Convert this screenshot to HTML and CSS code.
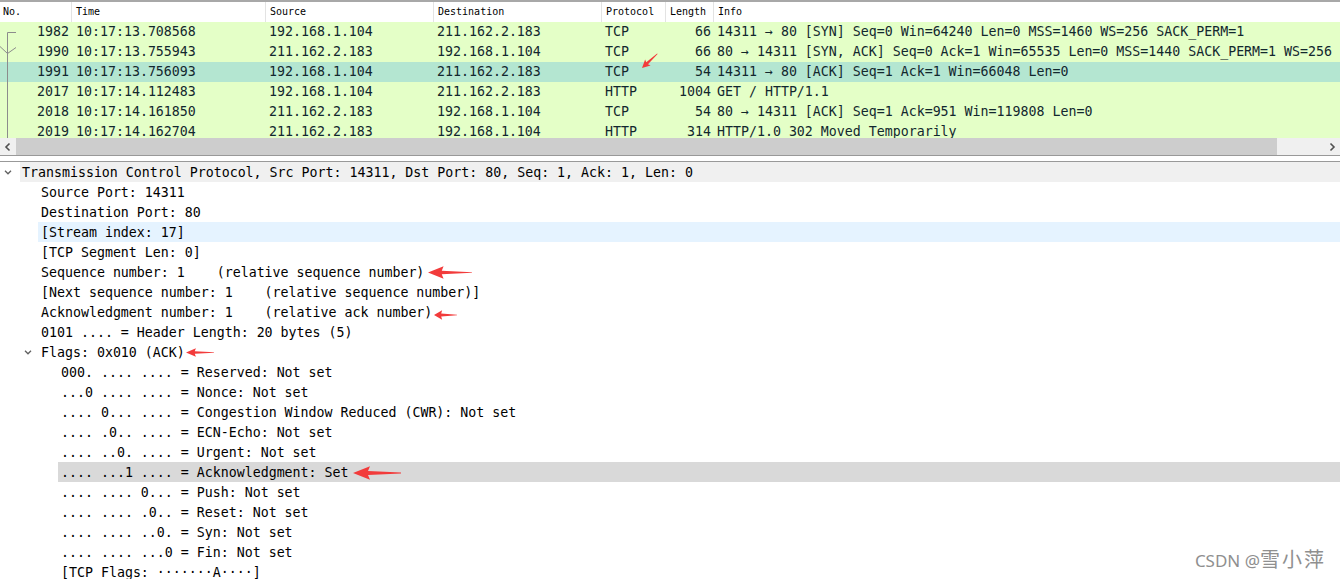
FILE: index.html
```html
<!DOCTYPE html>
<html>
<head>
<meta charset="utf-8">
<link rel="stylesheet" href="styles.css">
</head>
<body>
<div class="window">
  <div class="plist">
    <div class="phead">
      <div class="hc first">No.</div>
      <div class="hc">Time</div>
      <div class="hc">Source</div>
      <div class="hc">Destination</div>
      <div class="hc">Protocol</div>
      <div class="hc">Length</div>
      <div class="hc">Info</div>
    </div>
    <div class="prows">
      <div class="prow"><div class="c num">1982</div><div class="c">10:17:13.708568</div><div class="c">192.168.1.104</div><div class="c">211.162.2.183</div><div class="c">TCP</div><div class="c num">66</div><div class="c">14311 → 80 [SYN] Seq=0 Win=64240 Len=0 MSS=1460 WS=256 SACK_PERM=1</div></div>
      <div class="prow"><div class="c num">1990</div><div class="c">10:17:13.755943</div><div class="c">211.162.2.183</div><div class="c">192.168.1.104</div><div class="c">TCP</div><div class="c num">66</div><div class="c">80 → 14311 [SYN, ACK] Seq=0 Ack=1 Win=65535 Len=0 MSS=1440 SACK_PERM=1 WS=256</div></div>
      <div class="prow sel"><div class="c num">1991</div><div class="c">10:17:13.756093</div><div class="c">192.168.1.104</div><div class="c">211.162.2.183</div><div class="c">TCP</div><div class="c num">54</div><div class="c">14311 → 80 [ACK] Seq=1 Ack=1 Win=66048 Len=0</div></div>
      <div class="prow"><div class="c num">2017</div><div class="c">10:17:14.112483</div><div class="c">192.168.1.104</div><div class="c">211.162.2.183</div><div class="c">HTTP</div><div class="c num">1004</div><div class="c">GET / HTTP/1.1</div></div>
      <div class="prow"><div class="c num">2018</div><div class="c">10:17:14.161850</div><div class="c">211.162.2.183</div><div class="c">192.168.1.104</div><div class="c">TCP</div><div class="c num">54</div><div class="c">80 → 14311 [ACK] Seq=1 Ack=951 Win=119808 Len=0</div></div>
      <div class="prow"><div class="c num">2019</div><div class="c">10:17:14.162704</div><div class="c">211.162.2.183</div><div class="c">192.168.1.104</div><div class="c">HTTP</div><div class="c num">314</div><div class="c">HTTP/1.0 302 Moved Temporarily</div></div>
      <svg class="overlay" width="700" height="116" viewBox="0 0 700 116">
        <g stroke="#8c8c8c" stroke-width="1" fill="none">
          <polyline points="16,10.5 7.5,10.5 7.5,116"/>
          <polyline points="0,24.5 7.5,31.5 16,25.5"/>
        </g>
        <polygon transform="translate(642 46) rotate(-43)" fill="#f23b3b" points="0,0 8,-4 7,-1.3 21,-0.3 21,0.3 7,1.3 8,4"/>
      </svg>
    </div>
    <div class="hscroll">
      <div class="sbtn"><svg width="8" height="10" viewBox="0 0 8 10"><polyline points="5.5,1.5 2,5 5.5,8.5" fill="none" stroke="#505050" stroke-width="1.6"/></svg></div>
      <div class="thumb"></div>
      <div class="track"></div>
      <div class="sbtn"><svg width="8" height="10" viewBox="0 0 8 10"><polyline points="2.5,1.5 6,5 2.5,8.5" fill="none" stroke="#505050" stroke-width="1.6"/></svg></div>
    </div>
  </div>
  <div class="splitter"></div>
  <div class="details">
    <div class="drow"><div class="ind i0"><svg class="chev" width="8" height="5" viewBox="0 0 8 5"><polyline points="1,0.8 4,3.8 7,0.8"/></svg></div><div class="dc l0 hover"><span>Transmission Control Protocol, Src Port: 14311, Dst Port: 80, Seq: 1, Ack: 1, Len: 0</span></div></div>
    <div class="drow"><div class="ind i1"></div><div class="dc l1"><span>Source Port: 14311</span></div></div>
    <div class="drow"><div class="ind i1"></div><div class="dc l1"><span>Destination Port: 80</span></div></div>
    <div class="drow"><div class="ind i1"></div><div class="dc l1 blue"><span>[Stream index: 17]</span></div></div>
    <div class="drow"><div class="ind i1"></div><div class="dc l1"><span>[TCP Segment Len: 0]</span></div></div>
    <div class="drow"><div class="ind i1"></div><div class="dc l1"><span>Sequence number: 1    (relative sequence number)</span><svg class="mark m-seq" width="44" height="13" viewBox="0 0 48 14" preserveAspectRatio="none"><polygon points="0,7 17,0.3 15,5 48,6.6 48,7.4 15,9 17,13.7"/></svg></div></div>
    <div class="drow"><div class="ind i1"></div><div class="dc l1"><span>[Next sequence number: 1    (relative sequence number)]</span></div></div>
    <div class="drow"><div class="ind i1"></div><div class="dc l1"><span>Acknowledgment number: 1    (relative ack number)</span><svg class="mark m-ack" width="23" height="10" viewBox="0 0 48 14" preserveAspectRatio="none"><polygon points="0,7 17,0.3 15,5 48,6.6 48,7.4 15,9 17,13.7"/></svg></div></div>
    <div class="drow"><div class="ind i1"></div><div class="dc l1"><span>0101 .... = Header Length: 20 bytes (5)</span></div></div>
    <div class="drow"><div class="ind i1 hasch"><svg class="chev" width="8" height="5" viewBox="0 0 8 5"><polyline points="1,0.8 4,3.8 7,0.8"/></svg></div><div class="dc l1"><span>Flags: 0x010 (ACK)</span><svg class="mark m-flags" width="28" height="9" viewBox="0 0 48 14" preserveAspectRatio="none"><polygon points="0,7 17,0.3 15,5 48,6.6 48,7.4 15,9 17,13.7"/></svg></div></div>
    <div class="drow"><div class="ind i2"></div><div class="dc l2"><span>000. .... .... = Reserved: Not set</span></div></div>
    <div class="drow"><div class="ind i2"></div><div class="dc l2"><span>...0 .... .... = Nonce: Not set</span></div></div>
    <div class="drow"><div class="ind i2"></div><div class="dc l2"><span>.... 0... .... = Congestion Window Reduced (CWR): Not set</span></div></div>
    <div class="drow"><div class="ind i2"></div><div class="dc l2"><span>.... .0.. .... = ECN-Echo: Not set</span></div></div>
    <div class="drow"><div class="ind i2"></div><div class="dc l2"><span>.... ..0. .... = Urgent: Not set</span></div></div>
    <div class="drow"><div class="ind i2"></div><div class="dc l2 selected"><span>.... ...1 .... = Acknowledgment: Set</span><svg class="mark m-set" width="48" height="14" viewBox="0 0 48 14" preserveAspectRatio="none"><polygon points="0,7 17,0.3 15,5 48,6.6 48,7.4 15,9 17,13.7"/></svg></div></div>
    <div class="drow"><div class="ind i2"></div><div class="dc l2"><span>.... .... 0... = Push: Not set</span></div></div>
    <div class="drow"><div class="ind i2"></div><div class="dc l2"><span>.... .... .0.. = Reset: Not set</span></div></div>
    <div class="drow"><div class="ind i2"></div><div class="dc l2"><span>.... .... ..0. = Syn: Not set</span></div></div>
    <div class="drow"><div class="ind i2"></div><div class="dc l2"><span>.... .... ...0 = Fin: Not set</span></div></div>
    <div class="drow"><div class="ind i2"></div><div class="dc l2"><span>[TCP Flags: ·······A····]</span></div></div>
  </div>
  <div class="watermark"><span class="wm-lat">CSDN @</span><span class="wm-cjk">雪小萍</span></div>
</div>
</body>
</html>
```

FILE: styles.css
```css
html, body {
  margin: 0;
  padding: 0;
  background: #ffffff;
  overflow: hidden;
}

.window {
  position: relative;
  width: 1340px;
  height: 579px;
  overflow: hidden;
  font-family: "DejaVu Sans Mono", "Liberation Mono", monospace;
  font-size: 13.28px;
}

.plist {
  border-top: 2px solid #a8a8a8;
  border-bottom: 1px solid #999999;
}

.phead,
.prow {
  display: grid;
  grid-template-columns: 71px 194px 168px 168px 64px 48px 1fr;
}

.phead {
  height: 20px;
  background: #ffffff;
  font-size: 10px;
  color: #000000;
}

.hc {
  border-left: 1px solid #e3e3e3;
  padding-left: 4px;
  line-height: 20px;
  white-space: nowrap;
  overflow: hidden;
}

.hc.first {
  border-left: none;
  padding-left: 3px;
}

.prows {
  position: relative;
  height: 116px;
  overflow: hidden;
}

.prow {
  height: 20px;
  line-height: 19px;
  background: #e4ffc7;
  color: #12272e;
}

.prow.sel {
  background: #b4e6d1;
}

.c {
  border-left: 1px solid transparent;
  padding-left: 3px;
  white-space: nowrap;
  overflow: hidden;
}

.c:first-child {
  border-left: none;
}

.c:nth-child(2) {
  padding-left: 4px;
}

.c.num {
  text-align: right;
  padding-right: 2px;
  padding-left: 0;
}

.overlay {
  position: absolute;
  left: 0;
  top: 0;
  pointer-events: none;
}

.hscroll {
  display: flex;
  height: 17px;
  background: #f0f0f0;
}

.sbtn {
  flex: none;
  width: 16px;
  display: flex;
  align-items: center;
  justify-content: center;
}

.thumb {
  flex: none;
  width: 1261px;
  background: #cdcdcd;
}

.track {
  flex: 1;
}

.splitter {
  height: 5px;
  background: #ffffff;
  border-bottom: 1px solid #999999;
}

.details {
  color: #000000;
}

.drow {
  display: flex;
  height: 20px;
}

.ind {
  flex: none;
  display: flex;
  align-items: center;
}

.ind.i0 { width: 20px; padding-left: 4px; box-sizing: border-box; }
.ind.i1 { width: 38px; }
.ind.i1.hasch { padding-left: 24px; box-sizing: border-box; }
.ind.i2 { width: 58px; }

.chev polyline {
  fill: none;
  stroke: #606060;
  stroke-width: 1.3;
}

.dc {
  flex: 1;
  display: flex;
  align-items: center;
  white-space: pre;
  line-height: 20px;
  padding-top: 2px;
  box-sizing: border-box;
}

.dc.l0 { padding-left: 2px; }
.dc.l1 { padding-left: 3px; }
.dc.l2 { padding-left: 3px; }

.dc.hover { background: #f0f0f0; }
.dc.blue { background: #e5f3ff; }
.dc.selected { background: #d9d9d9; }

.mark {
  flex: none;
  fill: #f23b3b;
}

.m-seq { margin-left: 4px; margin-top: -2px; }
.m-ack { margin-left: 2px; margin-top: 4px; }
.m-flags { margin-left: 1px; margin-top: -2px; }
.m-set { margin-left: 4px; }

.watermark {
  position: absolute;
  right: 14px;
  bottom: 6px;
  color: #8f8f8f;
  font-family: "Noto Sans", "Noto Sans CJK SC", sans-serif;
  display: flex;
  align-items: baseline;
}

.wm-lat {
  font-size: 17px;
  white-space: pre;
}

.wm-cjk {
  font-family: "Noto Sans CJK SC", sans-serif;
  font-size: 20px;
  letter-spacing: 2px;
}
```
